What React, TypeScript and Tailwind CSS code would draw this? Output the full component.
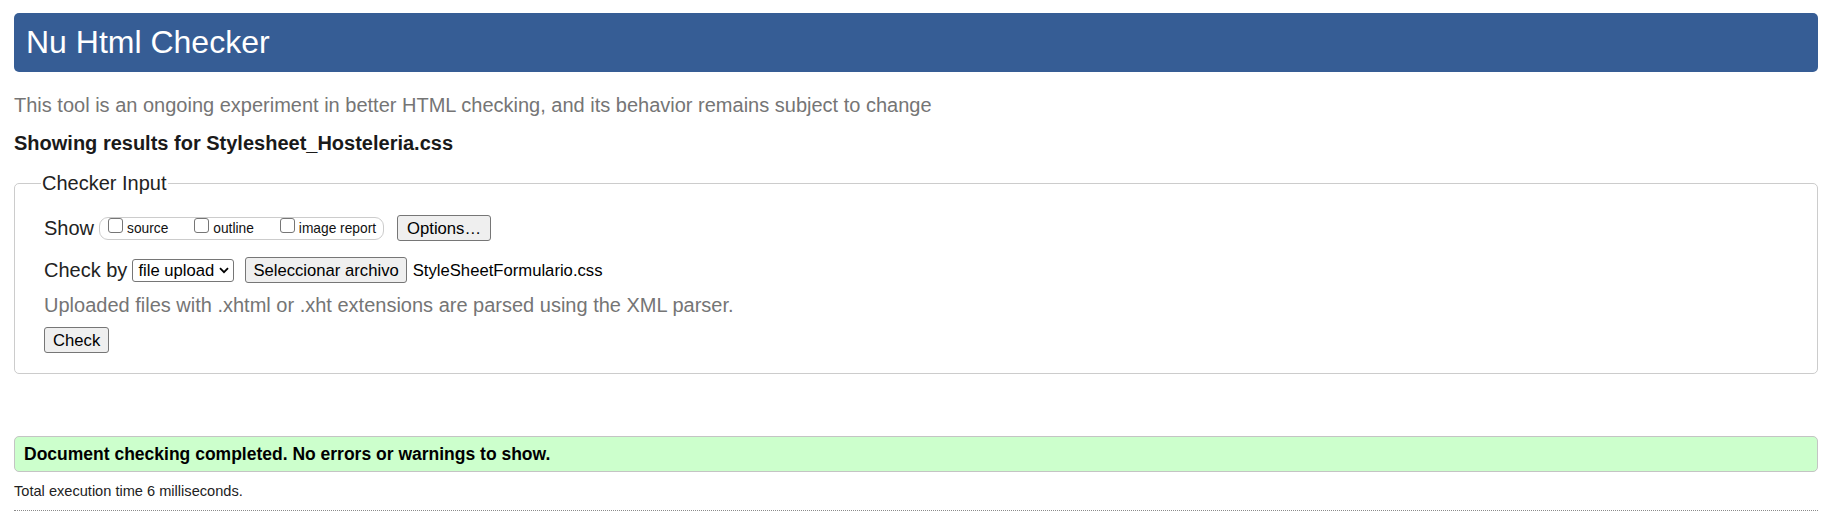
import { useState } from 'react';

const font = { fontFamily: '"Liberation Sans", Arial, sans-serif' };

function Box({ checked, onToggle, label }: { checked: boolean; onToggle: () => void; label: string }) {
  return (
    <label className="flex items-start gap-[4px] cursor-default" onClick={onToggle}>
      <span className="w-[15px] h-[15px] rounded-[3px] border border-[#767676] bg-white flex items-center justify-center">
        {checked && (
          <svg width="11" height="11" viewBox="0 0 11 11">
            <path d="M2 5.5 L4.5 8 L9 3" fill="none" stroke="#111" strokeWidth="1.6" />
          </svg>
        )}
      </span>
      <span className="mt-[3px] text-[13.75px] leading-[16px] text-[#111]">{label}</span>
    </label>
  );
}

export default function App() {
  const [show, setShow] = useState({ source: false, outline: false, image: false });

  return (
    <div className="min-h-screen bg-white pt-[13px] pl-[14px] pr-[27px] text-[#222]" style={font}>
      {/* Title bar */}
      <h1 className="h-[59px] flex items-center pl-[12px] bg-[#365d95] rounded-[5px] text-white text-[32px] leading-[37px] font-normal">
        Nu Html Checker
      </h1>

      <p className="mt-[22px] text-[20px] leading-[23px] text-[#757575]">
        This tool is an ongoing experiment in better HTML checking, and its behavior remains subject to change
      </p>

      <h2 className="mt-[15px] text-[20px] leading-[23px] font-bold text-[#1a1a1a]">
        Showing results for Stylesheet_Hosteleria.css
      </h2>

      {/* Checker input */}
      <fieldset className="mt-[17px] border border-[#cccccc] rounded-[5px] pl-[29px] pt-[20px] pb-[20px]">
        <legend className="-ml-[3px] px-[1px] text-[20px] leading-[23px] text-[#222]">Checker Input</legend>

        <div className="flex items-center h-[26px]">
          <span className="text-[20px] leading-[23px]">Show</span>
          <div className="ml-[5px] h-[23px] flex items-start gap-[26px] border border-[#cccccc] rounded-[9px] pl-[8px] pr-[7px]">
            <Box label="source" checked={show.source} onToggle={() => setShow({ ...show, source: !show.source })} />
            <Box label="outline" checked={show.outline} onToggle={() => setShow({ ...show, outline: !show.outline })} />
            <Box label="image report" checked={show.image} onToggle={() => setShow({ ...show, image: !show.image })} />
          </div>
          <button className="ml-[13px] h-[26px] px-[9px] bg-[#efefef] border border-[#767676] rounded-[3px] text-[16.67px] leading-[19px] text-black">
            Options…
          </button>
        </div>

        <div className="mt-[16px] flex items-center h-[26px]">
          <span className="text-[20px] leading-[23px]">Check by</span>
          <div className="ml-[5px] h-[23px] w-[102px] flex items-center justify-between border border-[#767676] rounded-[3px] pl-[5px] pr-[4px] bg-white">
            <span className="text-[16.67px] leading-[19px] text-black">file upload</span>
            <svg width="10" height="7" viewBox="0 0 10 7">
              <path d="M1 1.2 L5 5.2 L9 1.2" fill="none" stroke="#000" strokeWidth="1.8" />
            </svg>
          </div>
          <button className="ml-[11px] h-[26px] px-[7px] bg-[#efefef] border border-[#767676] rounded-[3px] text-[16.67px] leading-[19px] text-black">
            Seleccionar archivo
          </button>
          <span className="ml-[6px] text-[16.67px] leading-[19px] text-black">StyleSheetFormulario.css</span>
        </div>

        <p className="mt-[11px] text-[20px] leading-[23px] text-[#757575]">
          Uploaded files with .xhtml or .xht extensions are parsed using the XML parser.
        </p>

        <button className="mt-[10px] h-[26px] px-[8px] bg-[#efefef] border border-[#767676] rounded-[3px] text-[16.67px] leading-[19px] text-black">
          Check
        </button>
      </fieldset>

      {/* Result */}
      <div className="mt-[62px] h-[36px] flex items-center pl-[9px] bg-[#ccffcc] border border-[#c4c4c4] rounded-[5px]">
        <span className="text-[17.5px] leading-[20px] font-bold text-black">
          Document checking completed. No errors or warnings to show.
        </span>
      </div>

      <p className="mt-[11px] text-[14.6px] leading-[17px] text-[#222]">Total execution time 6 milliseconds.</p>

      <div className="mt-[10px] border-t border-dotted border-[#8a8a8a]" />
    </div>
  );
}
